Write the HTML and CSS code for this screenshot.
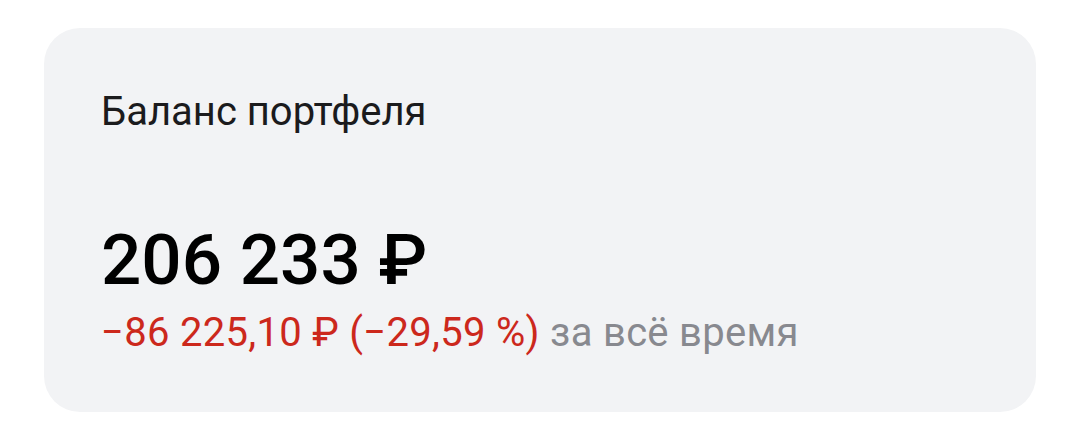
FILE: index.html
```html
<!DOCTYPE html>
<html lang="ru">

<head>
    <meta charset="UTF-8">
    <title>Баланс портфеля</title>
    <link rel="stylesheet" href="styles.css">
</head>

<body>
    <section class="card">
        <h2 class="card-title">Баланс портфеля</h2>
        <div class="balance">206 233 ₽</div>
        <p class="change">
            <span class="change-value">−86 225,10 ₽ (−29,59 %)</span>
            <span class="change-period">за всё время</span>
        </p>
    </section>
</body>

</html>
```

FILE: styles.css
```css
body {
    margin: 0;
    background-color: #fff;
    font-family: Roboto, "Noto Sans", sans-serif;
}

.card {
    margin: 28px 44px;
    height: 384px;
    box-sizing: border-box;
    padding: 60px 57px 55px;
    background-color: #f2f3f5;
    border-radius: 36px;
    display: flex;
    flex-direction: column;
}

.card-title {
    margin: 0;
    font-size: 40px;
    line-height: 48px;
    font-weight: 400;
    color: #1b1b1d;
}

.balance {
    margin-top: 82px;
    font-size: 71px;
    line-height: 84px;
    font-weight: 500;
    color: #000;
}

.change {
    margin: 7px 0 0;
    font-size: 40px;
    line-height: 48px;
    letter-spacing: 0.3px;
}

.change-value {
    color: #cc281c;
}

.change-period {
    color: #88898f;
}
```
